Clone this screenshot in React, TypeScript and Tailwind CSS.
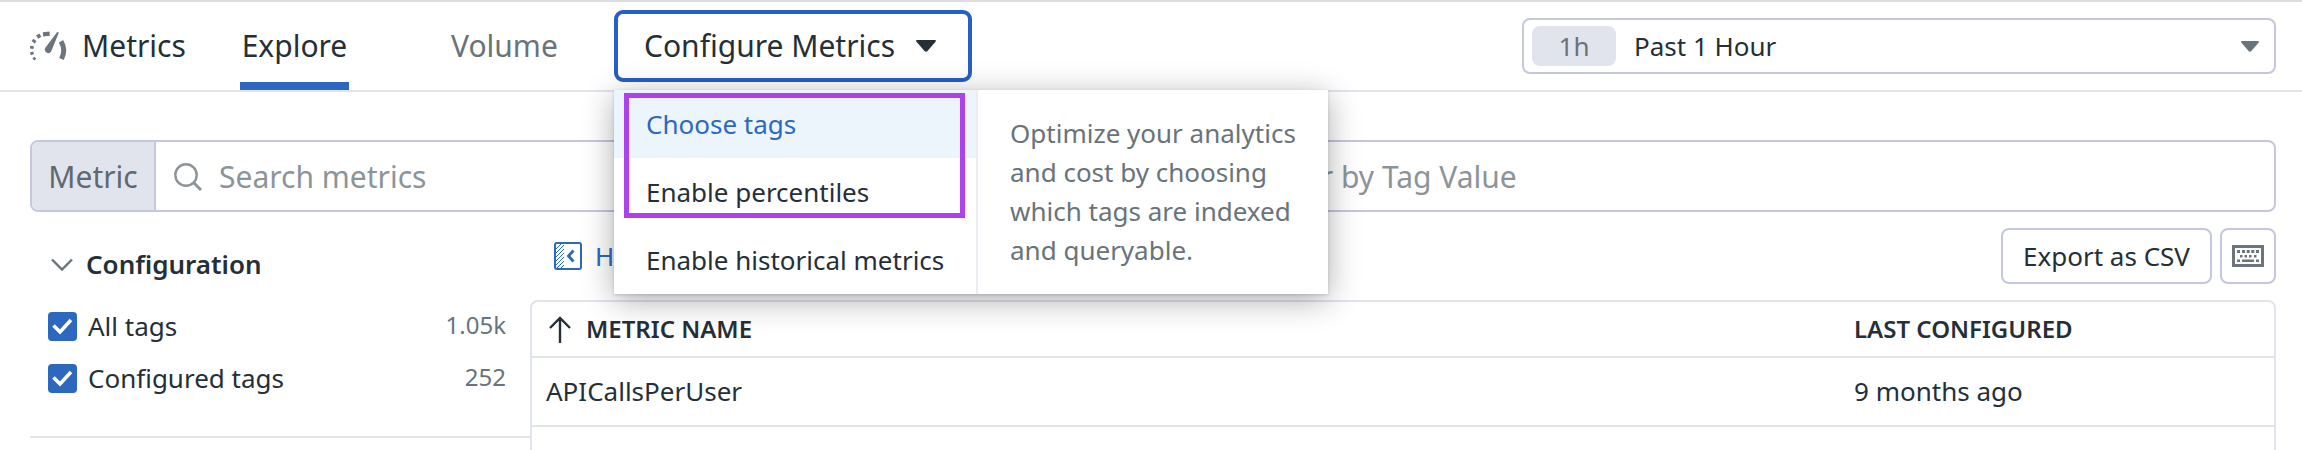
import React from "react";

function GaugeIcon() {
  return (
    <svg width="37" height="32" viewBox="30 30 111 96" fill="none" stroke="#6c757d" className="shrink-0">
      <path d="M40 113L46 119" strokeWidth="8" />
      <path d="M34.500 96L37.500 104" strokeWidth="10" />
      <path d="M35 86L36 78" strokeWidth="11" />
      <path d="M39.500 67L45 60" strokeWidth="12" />
      <path d="M51.500 51.500L61 45.500" strokeWidth="12" />
      <path d="M69 43L89 41" strokeWidth="12.500" />
      <path d="M111 37Q114 34 116.500 38L95 91A10.500 10.500 0 1 1 76 83Z" fill="#6c757d" stroke="none" />
      <path d="M123 64Q138.500 89 124.500 117" strokeWidth="15" />
    </svg>
  );
}

function Caret({ className }: { className: string }) {
  return (
    <svg viewBox="0 0 20 12" preserveAspectRatio="none" className={className}>
      <path d="M1 0H19Q20.5 0.4 19.5 1.8L11.5 11Q10 12.6 8.500 11L0.500 1.800Q-0.500 0.400 1 0Z" fill="currentColor" />
    </svg>
  );
}

function HidePanelIcon() {
  return (
    <svg width="28" height="28" viewBox="0 0 28 28" fill="none" stroke="#2c68c0" className="shrink-0">
      <rect x="1" y="1" width="26" height="26" rx="2" strokeWidth="2" />
      <path d="M2 7L7 2M2 11L10 3M2 15L10 7M2 19L10 11M2 23L10 15M3 26L10 19M7 26L10 23" strokeWidth="1" />
      <path d="M19.500 8.500L14.500 14L19.500 19.500" strokeWidth="2.800" />
    </svg>
  );
}

function KeyboardIcon() {
  return (
    <svg width="32" height="22" viewBox="0 0 32 22" fill="#6c757d">
      <path fillRule="evenodd" d="M0 0H32V22H0ZM3 3V19H29V3Z" />
      <path d="M5 5h3v3h-3zM10 5h3v3h-3zM14.700 5h3v3h-3zM19.300 5h3v3h-3zM24 5h3v3h-3zM8 10h2.500v2.500h-2.500zM12.500 10h2.500v2.500h-2.500zM17 10h2.500v2.500h-2.500zM22 10h2.500v2.500h-2.500zM5 14.500h3v2.500h-3zM10 14.500h12v2.500h-12zM24 14.500h3v2.500h-3z" />
    </svg>
  );
}

function CheckRow({ label, count }: { label: string; count: string }) {
  return (
    <div className="flex h-[52px] items-center pr-6 pl-[18px]">
      <span className="flex size-[29px] shrink-0 items-center justify-center rounded-[4px] bg-[#2c68c0]">
        <svg width="21" height="17" viewBox="0 0 21 17" fill="none">
          <path d="M1.500 7.500L8 14L19 2" stroke="#fff" strokeWidth="3.600" />
        </svg>
      </span>
      <span className="ml-[11px] flex-1">{label}</span>
      <span className="-mt-[2px] text-2xl text-[#69737a]">{count}</span>
    </div>
  );
}

function ConfigureMenu() {
  return (
    <div className="absolute top-[80px] left-0 z-10 flex h-[204px] w-[714px] bg-white text-[26px] shadow-[0_6px_30px_rgba(0,0,0,0.32),0_1px_3px_rgba(0,0,0,0.15)]">
      <div className="w-[364px] shrink-0 border-r-2 border-[#ebecf4]">
        <div className="flex h-[68px] items-center bg-[#edf5fc] pl-8 text-[#2c68c0]">Choose tags</div>
        <div className="flex h-[68px] items-center pl-8">Enable percentiles</div>
        <div className="flex h-[68px] items-center pl-8">Enable historical metrics</div>
      </div>
      <p className="pt-[24px] pl-8 leading-[39px] whitespace-nowrap text-[#69737a]">
        Optimize your analytics<br />and cost by choosing<br />which tags are indexed<br />and queryable.
      </p>
      <div className="absolute top-[3px] left-[10px] h-[125px] w-[341px] border-[5px] border-[#ae41eb]" />
    </div>
  );
}

export default function App() {
  return (
    <div className="h-[450px] w-[2302px] overflow-hidden border-t-2 border-[#dddddd] bg-white font-['Noto_Sans',sans-serif] text-[26px] leading-[36px] text-[#252f38]">
      <header className="flex h-[90px] items-start border-b-2 border-[#e2e4ed] pr-[26px] pl-[30px] text-[30px]">
        <div className="flex h-[88px] w-[210px] items-center">
          <GaugeIcon />
          <span className="ml-[15px]">Metrics</span>
        </div>
        <div className="flex h-[88px] w-[109px] items-center justify-center border-b-8 border-[#2c68c0] pt-[8px]">Explore</div>
        <div className="ml-[102px] flex h-[88px] items-center text-[#69737a]">Volume</div>
        <div className="relative mt-2 ml-auto h-[72px] w-[358px]">
          <div className="flex h-[72px] items-center rounded-[9px] border-4 border-[#265fc8] pl-[26px]">
            <span>Configure Metrics</span>
            <Caret className="ml-[21px] h-[12px] w-[20px]" />
          </div>
          <ConfigureMenu />
        </div>
        <div className="mt-4 ml-[550px] flex h-[56px] w-[754px] items-center rounded-lg border-2 border-[#c4c7df] pr-[15px] pl-2 text-[26px]">
          <span className="flex h-10 w-[84px] items-center justify-center rounded-lg bg-[#e2e4ed] text-[#69737a]">1h</span>
          <span className="ml-[18px] flex-1">Past 1 Hour</span>
          <Caret className="h-[11px] w-[18px] text-[#69737a]" />
        </div>
      </header>

      <div className="mr-[26px] mt-12 ml-[30px] flex h-[72px] overflow-hidden rounded-lg border-2 border-[#c4c7df] text-[30px]">
        <div className="flex w-[124px] items-center justify-center border-r-2 border-[#c4c7df] bg-[#e2e4ed] pt-[2px] text-[#5f6970]">Metric</div>
        <div className="flex w-[1083px] items-center pt-[2px] pl-[18px] text-[#8d9499]">
          <svg width="28" height="28" viewBox="0 0 28 28" fill="none" stroke="#8d9499" strokeWidth="2.400">
            <circle cx="12" cy="12" r="10.700" />
            <path d="M19.500 19.500L27 27" strokeWidth="3" />
          </svg>
          <span className="ml-[17px]">Search metrics</span>
        </div>
        <div className="flex items-center pt-[2px] pl-[23px] text-[#8d9499]">Filter by Tag Value</div>
      </div>

      <div className="flex pr-[26px] pl-[30px]">
        <aside className="w-[500px]">
          <div className="flex h-[85px] items-center pt-[20px] pl-[21px]">
            <svg width="22" height="13" viewBox="0 0 22 13" fill="none">
              <path d="M1 1.500L11 11.500L21 1.500" stroke="#69737a" strokeWidth="2.400" />
            </svg>
            <span className="-mt-[2px] ml-[13px] font-semibold">Configuration</span>
          </div>
          <div className="pt-[3px]">
            <CheckRow label="All tags" count="1.05k" />
            <CheckRow label="Configured tags" count="252" />
          </div>
          <div className="mt-[32px] h-[2px] bg-[#e2e4ed]" />
        </aside>

        <main className="w-[1746px]">
          <div className="flex h-[88px] items-center">
            <div className="flex flex-1 items-center pl-[24px] text-[#2c68c0]">
              <HidePanelIcon />
              <span className="ml-[13px]">H</span>
            </div>
            <button className="flex h-[56px] w-[211px] items-center justify-center rounded-lg border-2 border-[#c4c7df]">Export as CSV</button>
            <button className="ml-2 flex size-[56px] items-center justify-center rounded-lg border-2 border-[#c4c7df]">
              <KeyboardIcon />
            </button>
          </div>
          <div className="h-[170px] rounded-t-lg border-2 border-b-0 border-[#e2e4ed]">
            <div className="flex h-[56px] items-center border-b-2 border-[#e2e4ed] pl-[17px] text-2xl font-semibold">
              <svg width="22" height="27" viewBox="0 0 22 27" fill="none" stroke="#252f38" strokeWidth="2.400">
                <path d="M11 27V2M1 12L11 2L21 12" />
              </svg>
              <span className="ml-[15px] w-[1268px]">METRIC NAME</span>
              <span>LAST CONFIGURED</span>
            </div>
            <div className="flex h-[69px] items-center border-b-2 border-[#e2e4ed] pb-[2px] pl-[14px]">
              <span className="w-[1308px]">APICallsPerUser</span>
              <span>9 months ago</span>
            </div>
          </div>
        </main>
      </div>
    </div>
  );
}
